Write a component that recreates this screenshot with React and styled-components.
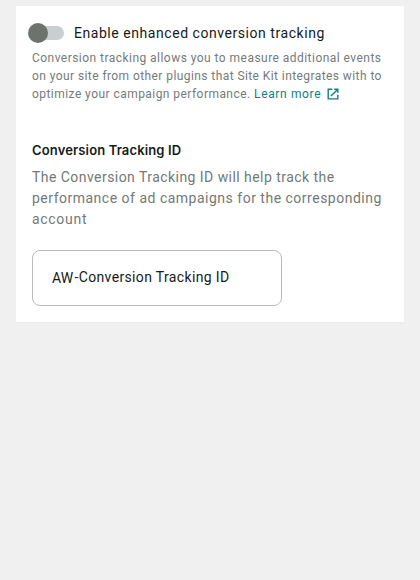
import React from "react";
import styled, { createGlobalStyle } from "styled-components";

const GlobalStyle = createGlobalStyle`
  *, *::before, *::after { box-sizing: border-box; }
  body { margin: 0; background: #f0f0f0; font-family: Roboto, sans-serif; }
`;
const Page = styled.main`
  min-height: 580px;
  padding: 6px 16px;
`;
const Card = styled.section`
  height: 316px;
  padding: 16px;
  background: #fff;
  box-shadow: 0 1px 0 #ebebeb;
`;
const SwitchRow = styled.label`
  display: flex;
  align-items: center;
  height: 22px;
  gap: 10px;
`;
const Switch = styled.span`
  display: flex;
  align-items: center;
  width: 32px;
  height: 14px;
  border-radius: 7px;
  background: #c8ced1;
`;
const Thumb = styled.span`
  width: 20px;
  height: 20px;
  flex: none;
  margin-left: -4px;
  border-radius: 50%;
  background: #6c726e;
`;
const SwitchLabel = styled.span`
  font-size: 14px;
  line-height: 20px;
  letter-spacing: 0.55px;
  color: #161b18;
`;
const Line = styled.span`
  display: block;
  white-space: nowrap;
  letter-spacing: ${(p) => p.$spacing}px;
`;
const Help = styled.p`
  margin: 5px 0 0;
  font-size: 12px;
  line-height: 18px;
  color: #767b78;
`;
const Link = styled.a`
  color: #108080;
  letter-spacing: 0.64px;
  text-decoration: none;
`;
const ExternalIcon = styled.svg`
  width: 12px;
  height: 12px;
  margin-left: 6px;
  vertical-align: -2px;
`;
const Heading = styled.h3`
  margin: 37px 0 0;
  font: 600 13px/20px Inter, sans-serif;
  letter-spacing: 0.14px;
  color: #161b18;
`;
const Body = styled.p`
  margin: 7px 0 0;
  font-size: 14px;
  line-height: 21px;
  color: #747976;
`;
const Field = styled.div`
  display: flex;
  align-items: center;
  width: 250px;
  height: 56px;
  margin-top: 20px;
  padding: 0 19px 2px;
  border: 1px solid #b8bdb9;
  border-radius: 8px;
  font-size: 14px;
  line-height: 20px;
  color: #161b18;
`;
const Prefix = styled.span`
  width: 22.5px;
  padding-top: 2px;
  white-space: nowrap;
`;
const Value = styled.span`
  letter-spacing: 0.35px;
  white-space: nowrap;
`;

export default function App() {
  return (
    <Page>
      <GlobalStyle />
      <Card>
        <SwitchRow>
          <Switch role="switch" aria-checked="false"><Thumb /></Switch>
          <SwitchLabel>Enable enhanced conversion tracking</SwitchLabel>
        </SwitchRow>
        <Help>
          <Line $spacing={0.46}>Conversion tracking allows you to measure additional events</Line>
          <Line $spacing={0.42}>on your site from other plugins that Site Kit integrates with to</Line>
          <Line $spacing={0.45}>
            optimize your campaign performance.{" "}
            <Link href="#">
              Learn more
              <ExternalIcon viewBox="0 0 12 12" fill="none" stroke="#108080" strokeWidth="1.4">
                <path d="M5.3 1.3H1.2v9.6h9.6V6.7M7.2 1.2h3.6v3.6M10.8 1.2L4 8" />
              </ExternalIcon>
            </Link>
          </Line>
        </Help>
        <Heading>Conversion Tracking ID</Heading>
        <Body>
          <Line $spacing={0.45}>The Conversion Tracking ID will help track the</Line>
          <Line $spacing={0.5}>performance of ad campaigns for the corresponding</Line>
          <Line $spacing={0.7}>account</Line>
        </Body>
        <Field>
          <Prefix>AW</Prefix>
          <Value>-Conversion Tracking ID</Value>
        </Field>
      </Card>
    </Page>
  );
}
